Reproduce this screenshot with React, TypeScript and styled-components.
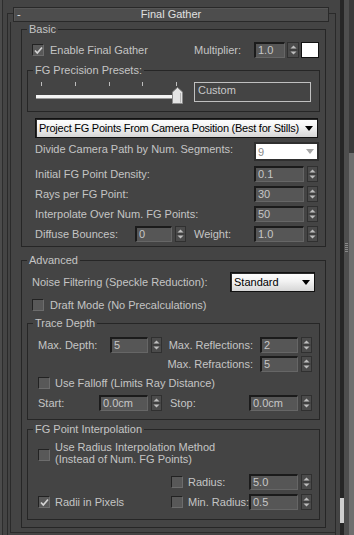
import React from "react";
import styled, { createGlobalStyle } from "styled-components";

const GlobalStyle = createGlobalStyle`
  html, body { margin: 0; padding: 0; background: #444444; }
  body {
    font-family: "Liberation Sans", Arial, sans-serif;
    font-size: 11px;
    color: #c4c4c4;
  }
  *, *::before, *::after { box-sizing: border-box; }
`;

const Page = styled.div`
  display: flex;
  width: 354px;
  height: 535px;
  overflow: hidden;
  background: #444444;
`;

const LeftEdge = styled.div`
  flex: none;
  width: 7px;
  background: linear-gradient(to right, #4b4b4b 0 2px, #2d2d2d 2px 3px, #444444 3px);
`;

const Rollout = styled.div`
  flex: none;
  width: 329px;
  margin-top: 13px;
  border: 1px solid #2a2a2a;
  border-bottom: none;
  display: flex;
  flex-direction: column;
`;

const TitleBar = styled.div`
  flex: none;
  height: 15px;
  margin: -7px 6px 0 5px;
  border: 1px solid #292929;
  background: #4d4d4d;
  box-shadow: inset 1px 1px 0 #575757;
  display: grid;
  grid-template-columns: 1fr auto 1fr;
  align-items: center;
  color: #e0e0e0;
  line-height: 13px;
`;

const Collapse = styled.span`
  padding-left: 3px;
`;

const Body = styled.div`
  flex: none;
  height: 511px;
  margin-left: 2px;
  border-left: 1px solid #2a2a2a;
  border-bottom: 1px solid #2a2a2a;
  padding: 0 9px 0 10px;
  display: flex;
  flex-direction: column;
`;

const Group = styled.fieldset<{ $h: number; $mt?: number; $mx?: number }>`
  flex: none;
  height: ${(p) => p.$h}px;
  margin: ${(p) => p.$mt ?? 0}px ${(p) => p.$mx ?? 0}px 0;
  padding: 0;
  min-width: 0;
  border: 1px solid #262626;
  display: flex;
  flex-direction: column;
`;

const Legend = styled.legend`
  margin-left: 5px;
  padding: 0 2px;
  height: 14px;
  line-height: 14px;
  color: #c4c4c4;
`;

const Row = styled.div<{ $h?: number; $mt?: number; $pl?: number; $top?: boolean }>`
  flex: none;
  display: flex;
  align-items: ${(p) => (p.$top ? "flex-start" : "center")};
  height: ${(p) => p.$h ?? 16}px;
  margin-top: ${(p) => p.$mt ?? 0}px;
  padding-left: ${(p) => p.$pl ?? 0}px;
`;

const Label = styled.span<{ $w?: number; $right?: boolean; $ml?: number; $mr?: number }>`
  flex: none;
  width: ${(p) => (p.$w ? `${p.$w}px` : "auto")};
  margin-left: ${(p) => p.$ml ?? 0}px;
  margin-right: ${(p) => p.$mr ?? 0}px;
  text-align: ${(p) => (p.$right ? "right" : "left")};
  white-space: nowrap;
  line-height: 14px;
`;

const TwoLine = styled.span`
  flex: none;
  margin-left: 5px;
  line-height: 12px;
  white-space: nowrap;
`;

const Field = styled.div<{ $w: number }>`
  flex: none;
  width: ${(p) => p.$w}px;
  height: 16px;
  background: #565656;
  border-style: solid;
  border-width: 2px 1px 1px 2px;
  border-color: #1b1b1b #666666 #666666 #1b1b1b;
  color: #c6c6c6;
  padding-left: 2px;
  line-height: 12px;
  font-size: 11px;
`;

const SpinBox = styled.div<{ $ml?: number; $w?: number }>`
  flex: none;
  width: ${(p) => p.$w ?? 11}px;
  height: 16px;
  margin-left: ${(p) => p.$ml ?? 3}px;
  background: #4b4b4b;
  border: 1px solid #303030;
  display: flex;
  align-items: center;
  justify-content: center;
`;

const Spinner = ({ ml, w }: { ml?: number; w?: number }) => (
  <SpinBox $ml={ml} $w={w}>
    <svg width="9" height="14" viewBox="0 0 9 14">
      <path d="M4.5 2.5 L7.5 5.5 H1.5 Z" fill="#bdbdbd" />
      <path d="M0.5 7 H8.5" stroke="#343434" strokeWidth="1" />
      <path d="M1.5 8.5 H7.5 L4.5 11.5 Z" fill="#bdbdbd" />
    </svg>
  </SpinBox>
);

const Box = styled.span<{ $ml?: number; $mt?: number }>`
  flex: none;
  width: 12px;
  height: 12px;
  margin-left: ${(p) => p.$ml ?? 0}px;
  margin-top: ${(p) => p.$mt ?? 0}px;
  background: #585858;
  border: 1px solid;
  border-color: #222222 #6c6c6c #6c6c6c #222222;
  display: flex;
  align-items: center;
  justify-content: center;
`;

const Check = ({ on, ml, mt }: { on?: boolean; ml?: number; mt?: number }) => (
  <Box $ml={ml} $mt={mt}>
    {on && (
      <svg width="9" height="9" viewBox="0 0 9 9">
        <polyline points="1,4.5 3.3,7 8,1.5" fill="none" stroke="#d4d4d4" strokeWidth="1.7" />
      </svg>
    )}
  </Box>
);

const Swatch = styled.div`
  flex: none;
  width: 18px;
  height: 16px;
  margin-left: 2px;
  background: #ffffff;
  border: 1px solid #111111;
`;

const Drop = styled.div<{ $w: number; $ml?: number }>`
  flex: none;
  width: ${(p) => p.$w}px;
  height: 20px;
  margin-left: ${(p) => p.$ml ?? 0}px;
  border: 1px solid #111111;
  box-shadow: inset 1px 1px 0 #2a2a2a;
  background: linear-gradient(#ffffff, #f2f2f2 45%, #d6d6d6);
  color: #000000;
  display: flex;
  align-items: center;
  justify-content: space-between;
  padding: 0 4px 0 3px;
  white-space: nowrap;
  overflow: hidden;
`;

const DropText = styled.span`
  letter-spacing: -0.25px;
`;

const Combo = styled.div<{ $w: number }>`
  flex: none;
  width: ${(p) => p.$w}px;
  height: 19px;
  border: 2px solid #2f2f2f;
  background: #ffffff;
  color: #8a8a8a;
  display: flex;
  align-items: center;
  justify-content: space-between;
  padding: 0 3px 0 2px;
`;

const Arrow = ({ color }: { color: string }) => (
  <svg width="8" height="5" viewBox="0 0 8 5" style={{ flex: "none" }}>
    <path d="M0 0 H8 L4 5 Z" fill={color} />
  </svg>
);

const PresetRow = styled.div`
  flex: none;
  display: flex;
  align-items: flex-start;
  margin-top: 5px;
  padding-left: 8px;
`;

const SliderWrap = styled.div`
  position: relative;
  flex: none;
  width: 148px;
  height: 22px;
`;

const Ticks = styled.div`
  display: flex;
  justify-content: space-between;
  width: 136px;
  height: 4px;
  margin-left: 5px;
`;

const Tick = styled.span`
  width: 1px;
  height: 4px;
  background: #bdbdbd;
`;

const Track = styled.div`
  width: 141px;
  height: 4px;
  margin-top: 9px;
  background: #f4f4f4;
  border-bottom: 1px solid #9a9a9a;
`;

const Thumb = styled.svg`
  position: absolute;
  left: 136px;
  top: 5px;
`;

const PresetBox = styled.div`
  flex: none;
  width: 117px;
  height: 20px;
  margin-left: 10px;
  border: 1px solid #c0c0c0;
  padding-left: 3px;
  line-height: 15px;
  color: #c8c8c8;
`;

const Gutter = styled.div`
  flex: none;
  width: 18px;
  display: flex;
`;

const GapStrip = styled.div`
  width: 4px;
  background: #444444;
`;

const Track2 = styled.div`
  width: 4px;
  background: #262626;
  display: flex;
  flex-direction: column;
  justify-content: flex-end;
`;

const ScrollThumb = styled.div`
  height: 25px;
  margin-bottom: 12px;
  background: #cfcfcf;
`;

const Splitter = styled.div`
  width: 5px;
  background: #4e4e4e;
  display: flex;
  flex-direction: column;
  align-items: center;
  padding-top: 243px;
`;

const Grip = styled.span`
  width: 3px;
  height: 1px;
  margin-bottom: 1px;
  background: #8a8a8a;
`;

const EdgeStrip = styled.div`
  width: 5px;
  display: flex;
  flex-direction: column;
`;

const EdgeTop = styled.div`
  height: 153px;
  background: #3a3a3a;
`;

const EdgeBottom = styled.div`
  flex: 1;
  background: #6e6e6e;
`;

export default function App() {
  return (
    <>
      <GlobalStyle />
      <Page>
        <LeftEdge />
        <Rollout>
          <TitleBar>
            <Collapse>-</Collapse>
            <span>Final Gather</span>
            <span />
          </TitleBar>
          <Body>
            <Group $h={225}>
              <Legend>Basic</Legend>
              <Row $h={20} $mt={4} $pl={10}>
                <Check on />
                <Label $ml={6} $w={144}>Enable Final Gather</Label>
                <Label $w={60}>Multiplier:</Label>
                <Field $w={31}>1.0</Field>
                <Spinner ml={2} w={12} />
                <Swatch />
              </Row>
              <Group $h={49} $mt={3} $mx={5}>
                <Legend>FG Precision Presets:</Legend>
                <PresetRow>
                  <SliderWrap>
                    <Ticks>
                      <Tick />
                      <Tick />
                      <Tick />
                      <Tick />
                      <Tick />
                    </Ticks>
                    <Track />
                    <Thumb width="11" height="17" viewBox="0 0 11 17">
                      <path d="M0.5 5 L5.5 0.5 L10.5 5 V16.5 H0.5 Z" fill="#e4e4e4" stroke="#8a8a8a" />
                      <path d="M8.5 6 V15.5" stroke="#b5b5b5" />
                    </Thumb>
                  </SliderWrap>
                  <PresetBox>Custom</PresetBox>
                </PresetRow>
              </Group>
              <Row $h={20} $mt={6}>
                <Drop $w={283} $ml={13}>
                  <DropText>Project FG Points From Camera Position (Best for Stills)</DropText>
                  <Arrow color="#000" />
                </Drop>
              </Row>
              <Row $h={20} $mt={4} $pl={13} $top>
                <Label $w={219}>Divide Camera Path by Num. Segments:</Label>
                <Combo $w={65}>
                  <span>9</span>
                  <Arrow color="#a8a8a8" />
                </Combo>
              </Row>
              <Row $mt={4} $pl={13}>
                <Label $w={219}>Initial FG Point Density:</Label>
                <Field $w={50}>0.1</Field>
                <Spinner />
              </Row>
              <Row $mt={4} $pl={13}>
                <Label $w={219}>Rays per FG Point:</Label>
                <Field $w={50}>30</Field>
                <Spinner />
              </Row>
              <Row $mt={4} $pl={13}>
                <Label $w={219}>Interpolate Over Num. FG Points:</Label>
                <Field $w={50}>50</Field>
                <Spinner />
              </Row>
              <Row $mt={4} $pl={13}>
                <Label $w={100}>Diffuse Bounces:</Label>
                <Field $w={37}>0</Field>
                <Spinner />
                <Label $ml={8} $w={60}>Weight:</Label>
                <Field $w={50}>1.0</Field>
                <Spinner />
              </Row>
            </Group>

            <Group $h={275} $mt={6}>
              <Legend>Advanced</Legend>
              <Row $h={20} $mt={5} $pl={10}>
                <Label $w={198}>Noise Filtering (Speckle Reduction):</Label>
                <Drop $w={85}>
                  <span>Standard</span>
                  <Arrow color="#000" />
                </Drop>
              </Row>
              <Row $h={20} $mt={3} $pl={10}>
                <Check />
                <Label $ml={6}>Draft Mode (No Precalculations)</Label>
              </Row>
              <Group $h={104} $mt={1} $mx={5}>
                <Legend>Trace Depth</Legend>
                <Row $mt={7} $pl={10}>
                  <Label $w={72}>Max. Depth:</Label>
                  <Field $w={38}>5</Field>
                  <Spinner />
                  <Label $w={91} $right $mr={7}>Max. Reflections:</Label>
                  <Field $w={38}>2</Field>
                  <Spinner />
                </Row>
                <Row $mt={3} $pl={10}>
                  <Label $w={215} $right $mr={7}>Max. Refractions:</Label>
                  <Field $w={38}>5</Field>
                  <Spinner />
                </Row>
                <Row $mt={3} $pl={10}>
                  <Check />
                  <Label $ml={5}>Use Falloff (Limits Ray Distance)</Label>
                </Row>
                <Row $mt={4} $pl={10}>
                  <Label $w={61}>Start:</Label>
                  <Field $w={49}>0.0cm</Field>
                  <Spinner />
                  <Label $ml={8} $w={79}>Stop:</Label>
                  <Field $w={49}>0.0cm</Field>
                  <Spinner />
                </Row>
              </Group>
              <Group $h={98} $mt={2} $mx={5}>
                <Legend>FG Point Interpolation</Legend>
                <Row $h={24} $mt={5} $pl={10}>
                  <Check mt={3} />
                  <TwoLine>
                    Use Radius Interpolation Method
                    <br />
                    (Instead of Num. FG Points)
                  </TwoLine>
                </Row>
                <Row $mt={9} $pl={143}>
                  <Check />
                  <Label $ml={5} $w={61}>Radius:</Label>
                  <Field $w={49}>5.0</Field>
                  <Spinner />
                </Row>
                <Row $mt={4} $pl={10}>
                  <Check on />
                  <Label $ml={5} $w={116}>Radii in Pixels</Label>
                  <Check />
                  <Label $ml={5} $w={61}>Min. Radius:</Label>
                  <Field $w={49}>0.5</Field>
                  <Spinner />
                </Row>
              </Group>
            </Group>
          </Body>
        </Rollout>
        <Gutter>
          <GapStrip />
          <Track2>
            <ScrollThumb />
          </Track2>
          <Splitter>
            <Grip />
            <Grip />
            <Grip />
            <Grip />
            <Grip />
          </Splitter>
          <EdgeStrip>
            <EdgeTop />
            <EdgeBottom />
          </EdgeStrip>
        </Gutter>
      </Page>
    </>
  );
}
